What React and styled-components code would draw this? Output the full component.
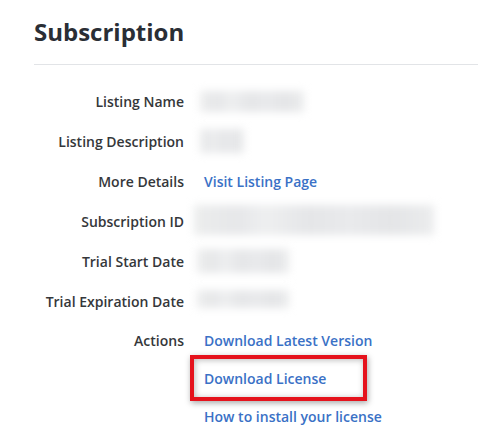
import React from "react";
import styled, { createGlobalStyle } from "styled-components";

const GlobalStyle = createGlobalStyle`
  html, body { margin: 0; padding: 0; background: #ffffff; }
  body { font-family: "Open Sans", "Noto Sans", "Liberation Sans", sans-serif; }
`;

const Page = styled.div`
  padding: 16px 0 0 34px;
  width: 444px;
  height: 422px;
  overflow: hidden;
`;

const Title = styled.h1`
  margin: 0 0 16px 0;
  font-size: 24px;
  line-height: 32px;
  font-weight: 700;
  color: #2a2e35;
`;

const Divider = styled.hr`
  margin: 0 0 17px 0;
  border: 0;
  height: 1px;
  background: #e2e4e7;
`;

const List = styled.dl`
  margin: 0;
  display: grid;
  grid-template-columns: 150px 1fr;
  column-gap: 20px;
`;

const Label = styled.dt`
  margin: 0;
  text-align: right;
  font-size: 14px;
  font-weight: 600;
  line-height: ${(p) => p.$line || 40}px;
  color: #35373a;
  white-space: nowrap;
`;

const Value = styled.dd`
  margin: 0;
  height: ${(p) => (p.$auto ? "auto" : "40px")};
  display: flex;
  flex-direction: ${(p) => (p.$stack ? "column" : "row")};
  align-items: ${(p) => (p.$stack ? "flex-start" : "center")};
`;

const Redacted = styled.div`
  width: ${(p) => p.$w}px;
  height: ${(p) => p.$h}px;
  margin-left: ${(p) => p.$x}px;
  margin-top: ${(p) => p.$y || 0}px;
  background: linear-gradient(
    90deg,
    #eceded 0%,
    #e6e7e9 18%,
    #eeeff0 30%,
    #e5e6e8 48%,
    #e9eaec 65%,
    #e4e5e7 82%,
    #ebeced 100%
  );
  filter: blur(4px);
`;

const Link = styled.a`
  display: block;
  font-size: 14px;
  font-weight: 600;
  line-height: ${(p) => p.$line || 40}px;
  color: #3a71c6;
  text-decoration: none;
  white-space: nowrap;
  cursor: pointer;
`;

const Highlighted = styled.div`
  position: relative;
`;

const Annotation = styled.span`
  position: absolute;
  left: -14px;
  top: -5px;
  width: 169px;
  height: 38px;
  border: 4px solid #e5121c;
  box-shadow: 1px 2px 6px rgba(0, 0, 0, 0.35), inset 1px 1px 6px rgba(0, 0, 0, 0.28);
  pointer-events: none;
`;

export default function App() {
  return (
    <>
      <GlobalStyle />
      <Page>
        <Title>Subscription</Title>
        <Divider />
        <List>
          <Label>Listing Name</Label>
          <Value>
            <Redacted $w={104} $h={21} $x={-4} $y={-2} />
          </Value>

          <Label>Listing Description</Label>
          <Value>
            <Redacted $w={44} $h={24} $x={-4} $y={-2} />
          </Value>

          <Label>More Details</Label>
          <Value>
            <Link>Visit Listing Page</Link>
          </Value>

          <Label>Subscription ID</Label>
          <Value>
            <Redacted $w={240} $h={30} $x={-10} $y={-4} />
          </Value>

          <Label>Trial Start Date</Label>
          <Value>
            <Redacted $w={92} $h={24} $x={-7} $y={-2} />
          </Value>

          <Label>Trial Expiration Date</Label>
          <Value>
            <Redacted $w={92} $h={18} $x={-7} $y={-6} />
          </Value>

          <Label $line={38}>Actions</Label>
          <Value $auto $stack>
            <Link $line={38}>Download Latest Version</Link>
            <Highlighted>
              <Link $line={38}>Download License</Link>
              <Annotation />
            </Highlighted>
            <Link $line={38}>How to install your license</Link>
          </Value>
        </List>
      </Page>
    </>
  );
}
